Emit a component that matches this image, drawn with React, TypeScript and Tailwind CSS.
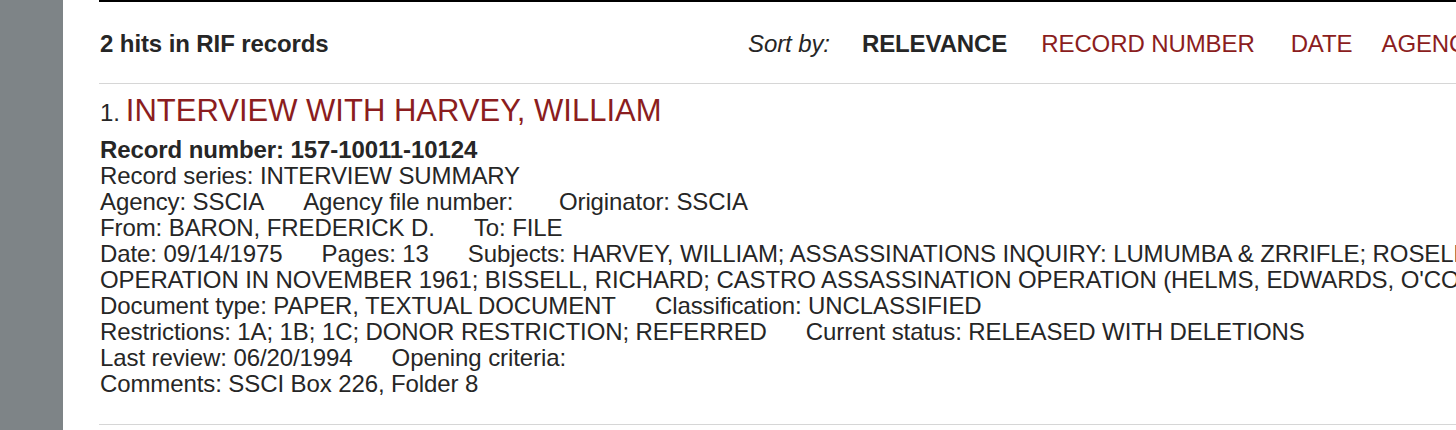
import React from 'react';

const red = 'text-[#8b1d20]';

function Field({ label, value, last }: { label: string; value?: string; last?: boolean }) {
  return (
    <span className={last ? '' : 'mr-[39px]'}>
      {label}: {value}
    </span>
  );
}

export default function App() {
  return (
    <div className="flex h-[430px] w-[1456px] overflow-hidden bg-white text-[#262626] font-['Liberation_Sans',Arial,sans-serif]">
      <div className="w-[63px] shrink-0 bg-[#7e8487]" />
      <main className="ml-[36px] w-[1600px] shrink-0">
        <div className="h-[2px] bg-black" />
        {/* results header */}
        <div className="flex h-[82px] items-center border-b border-[#d6d6d6] pl-px pt-[3px] text-[24px] tracking-[-0.1px]">
          <h2 className="w-[648px] font-bold">2 hits in RIF records</h2>
          <span className="italic">Sort by:</span>
          <span className="ml-[32px] font-bold">RELEVANCE</span>
          <a className={`ml-[34px] ${red}`}>RECORD NUMBER</a>
          <a className={`ml-[36px] ${red}`}>DATE</a>
          <a className={`ml-[29px] ${red}`}>AGENCY</a>
        </div>

        {/* record */}
        <div className="border-b border-[#d6d6d6] pb-[27px] pl-px pt-[9px] text-[24px] leading-[26px] tracking-[-0.1px]">
          <div className="mb-[8px] flex items-baseline">
            <span className="mr-[6px]">1.</span>
            <a className={`text-[31px] leading-[36px] tracking-[0px] ${red}`}>INTERVIEW WITH HARVEY, WILLIAM</a>
          </div>
          <div className="font-bold">Record number: 157-10011-10124</div>
          <div>Record series: INTERVIEW SUMMARY</div>
          <div className="whitespace-nowrap">
            <Field label="Agency" value="SSCIA" />
            <Field label="Agency file number" value="" />
            <Field label="Originator" value="SSCIA" last />
          </div>
          <div className="whitespace-nowrap">
            <Field label="From" value="BARON, FREDERICK D." />
            <Field label="To" value="FILE" last />
          </div>
          <div className="whitespace-nowrap">
            <Field label="Date" value="09/14/1975" />
            <Field label="Pages" value="13" />
            <Field label="Subjects" value="HARVEY, WILLIAM; ASSASSINATIONS INQUIRY: LUMUMBA & ZRRIFLE; ROSELLI, JOHN;" last />
          </div>
          <div className="whitespace-nowrap">
            OPERATION IN NOVEMBER 1961; BISSELL, RICHARD; CASTRO ASSASSINATION OPERATION (HELMS, EDWARDS, O'CONNELL)
          </div>
          <div className="whitespace-nowrap">
            <Field label="Document type" value="PAPER, TEXTUAL DOCUMENT" />
            <Field label="Classification" value="UNCLASSIFIED" last />
          </div>
          <div className="whitespace-nowrap">
            <Field label="Restrictions" value="1A; 1B; 1C; DONOR RESTRICTION; REFERRED" />
            <Field label="Current status" value="RELEASED WITH DELETIONS" last />
          </div>
          <div className="whitespace-nowrap">
            <Field label="Last review" value="06/20/1994" />
            <Field label="Opening criteria" value="" last />
          </div>
          <div>Comments: SSCI Box 226, Folder 8</div>
        </div>
      </main>
    </div>
  );
}
